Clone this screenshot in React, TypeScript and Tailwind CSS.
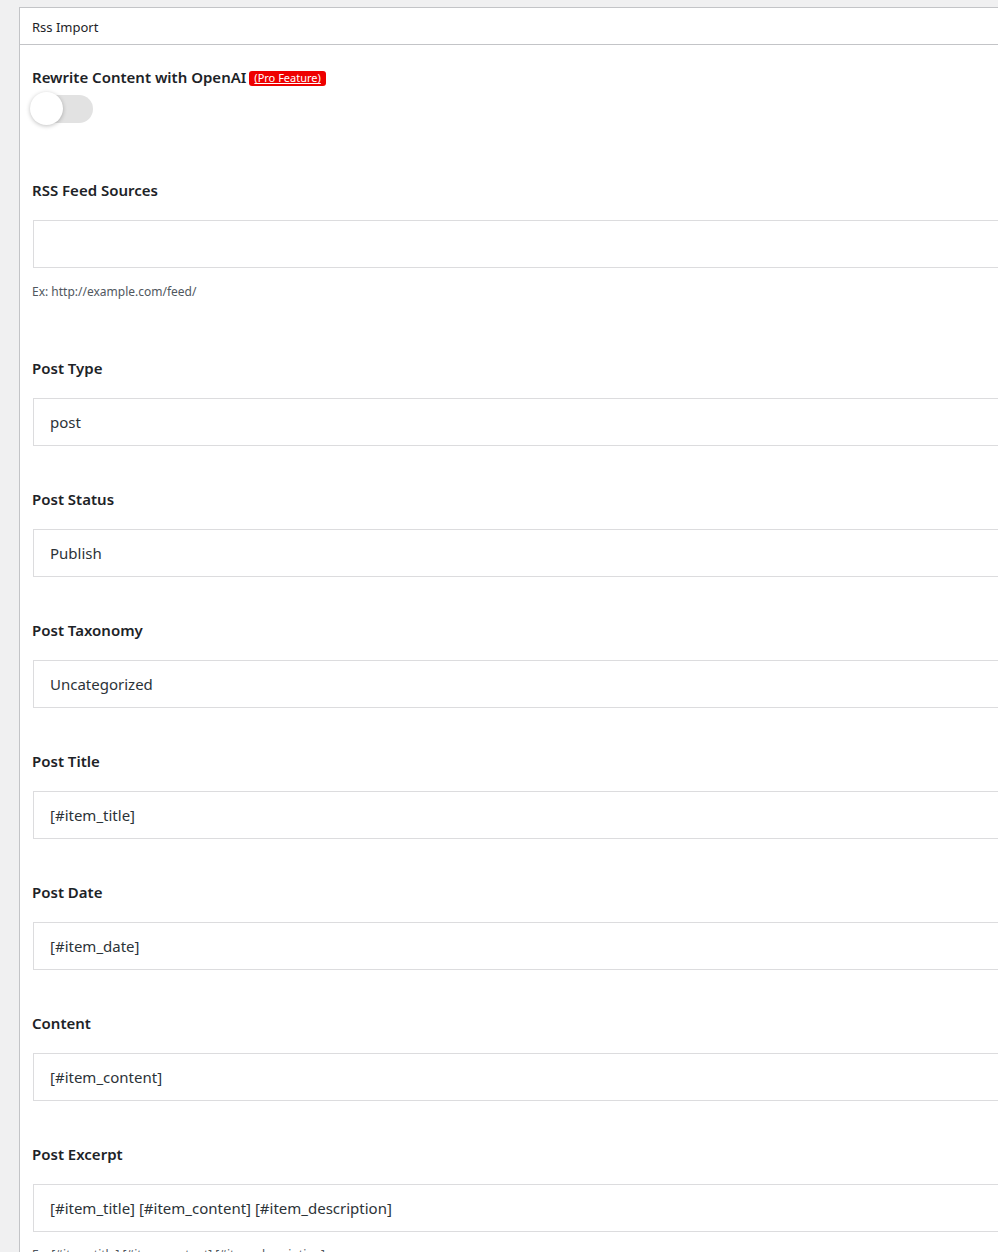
const fields = [
  { label: 'Post Type', value: 'post' },
  { label: 'Post Status', value: 'Publish' },
  { label: 'Post Taxonomy', value: 'Uncategorized' },
  { label: 'Post Title', value: '[#item_title]' },
  { label: 'Post Date', value: '[#item_date]' },
  { label: 'Content', value: '[#item_content]' },
  { label: 'Post Excerpt', value: '[#item_title] [#item_content] [#item_description]', help: 'Ex: [#item_title] [#item_content] [#item_description]' },
]

function Field({ label, value, help }: { label: string; value: string; help?: string }) {
  return (
    <div className="mb-[43px]">
      <div className="text-[15px] leading-[20px] font-semibold text-[#1d2327]">{label}</div>
      <div className="mt-[20px] ml-[1px] h-[48px] border border-[#dcdcde] bg-white flex items-center pl-[16px] text-[15px] text-[#2c3338] whitespace-nowrap">
        {value}
      </div>
      {help && <div className="mt-[14px] text-[12px] leading-[18px] text-[#50575e]">{help}</div>}
    </div>
  )
}

export default function App() {
  return (
    <div
      className="min-h-[1252px] bg-[#f0f0f1] pt-[7px] pl-[19px] overflow-hidden"
      style={{ fontFamily: '"Noto Sans", "Open Sans", Arial, sans-serif' }}
    >
      <div className="bg-white border-t border-l border-[#c3c4c7] w-[1000px] min-h-[1245px]">
        {/* Header */}
        <div className="h-[37px] border-b border-[#c3c4c7] flex items-center pl-[12px] pt-[3px] text-[13px] text-[#1d2327]">
          Rss Import
        </div>

        <div className="pl-[12px] pt-[22px]">
          {/* OpenAI toggle */}
          <div className="flex items-end gap-[3px]">
            <span className="text-[15px] leading-[20px] font-semibold text-[#1d2327]">Rewrite Content with OpenAI</span>
            <span className="mb-[1px] bg-[#ee0000] rounded-[3px] px-[5px] h-[15px] flex items-center text-[11px] text-white underline">
              (Pro Feature)
            </span>
          </div>
          <div className="relative mt-[5px] w-[62px] h-[34px]">
            <div className="absolute left-[4px] top-[3px] w-[57px] h-[28px] rounded-full bg-[#e2e2e2]" />
            <div className="absolute left-[-2px] top-0 w-[33px] h-[33px] rounded-full bg-white shadow-[0_1px_4px_rgba(0,0,0,0.25)]" />
          </div>

          {/* RSS sources */}
          <div className="mt-[54px] mb-[57px]">
            <div className="text-[15px] leading-[20px] font-semibold text-[#1d2327]">RSS Feed Sources</div>
            <div className="mt-[20px] ml-[1px] h-[48px] border border-[#dcdcde] bg-white" />
            <div className="mt-[15px] text-[12px] leading-[18px] text-[#50575e]">Ex: http://example.com/feed/</div>
          </div>

          {fields.map((f) => (
            <Field key={f.label} label={f.label} value={f.value} help={f.help} />
          ))}
        </div>
      </div>
    </div>
  )
}
